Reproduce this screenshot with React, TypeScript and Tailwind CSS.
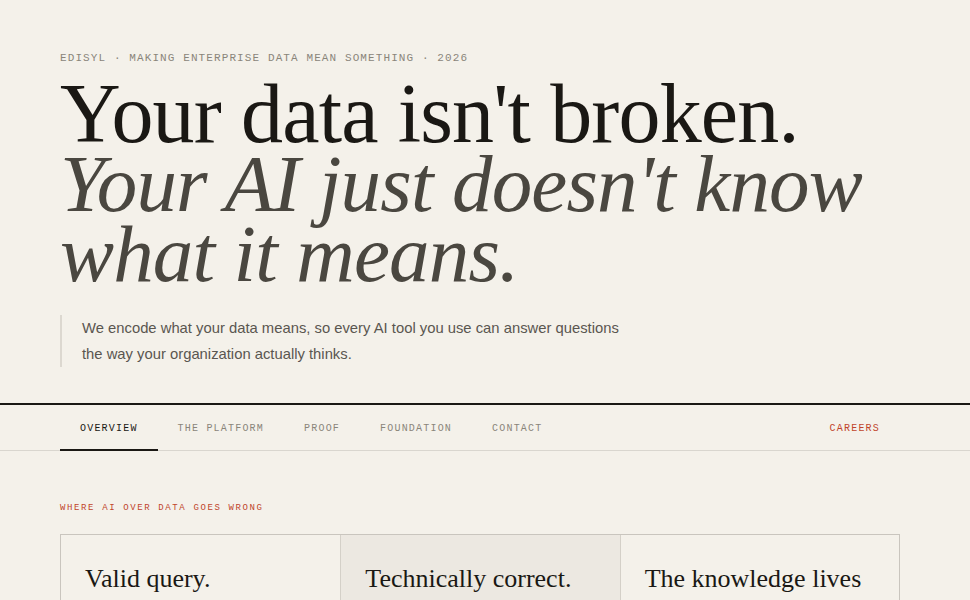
const serif = "font-['Liberation_Serif','Times_New_Roman',serif]";
const mono = "font-['Liberation_Mono','DejaVu_Sans_Mono',monospace]";
const sans = "font-['Liberation_Sans','Open_Sans',sans-serif]";

const tabs = ["Overview", "The Platform", "Proof", "Foundation", "Contact"];

const problems = [
    { head: "Valid query.", tail: "Wrong answer.", shaded: false },
    { head: "Technically correct.", tail: "Organizationally wrong.", shaded: true },
    { head: "The knowledge lives", tail: "in someone's head.", shaded: false },
];

const App = () => {
    return (
        <div className="min-h-screen bg-[#f4f1ea] text-[#1a1814]">

            {/* hero */}
            <section className="px-[60px] pt-[50px] pb-[36px]">
                <p className={`${mono} text-[11px] tracking-[0.1em] text-[#8a857a] uppercase`}>
                    Edisyl · Making enterprise data mean something · 2026
                </p>

                <h1 className={`${serif} mt-[12px] text-[84px] leading-[70px] tracking-[-0.01em] whitespace-nowrap`}>
                    <span className="block text-[#1a1814]">Your data isn't broken.</span>
                    <span className="block italic text-[81px] text-[#4a4740]">
                        Your AI just doesn't know
                        <br />
                        what it means.
                    </span>
                </h1>

                <div className="mt-[26px] border-l-2 border-[#dcd8d0] pl-[20px]">
                    <p className={`${sans} text-[14.8px] leading-[26px] text-[#5a5650]`}>
                        We encode what your data means, so every AI tool you use can answer questions
                        <br />
                        the way your organization actually thinks.
                    </p>
                </div>
            </section>

            {/* nav */}
            <nav className="border-t-2 border-b border-t-[#1a1814] border-b-[#d9d6cf]">
                <div className={`${mono} flex items-stretch pl-[60px] w-[900px] text-[10px] tracking-[0.12em] uppercase`}>
                    {tabs.map((t, i) => (
                        <a
                            key={t}
                            href="#"
                            className={
                                i === 0
                                    ? "px-[20px] pt-[16px] pb-[13px] border-b-2 border-[#1a1814] -mb-px text-[#1a1814]"
                                    : "px-[20px] pt-[16px] pb-[13px] text-[#8a857a]"
                            }
                        >
                            {t}
                        </a>
                    ))}
                    <a href="#" className="ml-auto px-[20px] pt-[16px] pb-[13px] text-[#c0452b]">
                        Careers
                    </a>
                </div>
            </nav>

            {/* problems */}
            <section className="px-[60px] pt-[51px]">
                <p className={`${mono} text-[9px] tracking-[0.18em] uppercase text-[#c0452b]`}>
                    Where AI over data goes wrong
                </p>

                <div className="mt-[19px] w-[840px] grid grid-cols-3 border border-[#c9c5be]">
                    {problems.map((p, i) => (
                        <div
                            key={p.head}
                            className={`px-[24px] pt-[29px] pb-[28px] ${i > 0 ? "border-l border-[#d4d0c8]" : ""} ${p.shaded ? "bg-[#ece8e1]" : ""}`}
                        >
                            <h3 className={`${serif} text-[26px] leading-[30px] text-[#1a1814]`}>
                                {p.head}
                                <br />
                                {p.tail}
                            </h3>
                        </div>
                    ))}
                </div>
            </section>
        </div>
    );
};

export default App;
